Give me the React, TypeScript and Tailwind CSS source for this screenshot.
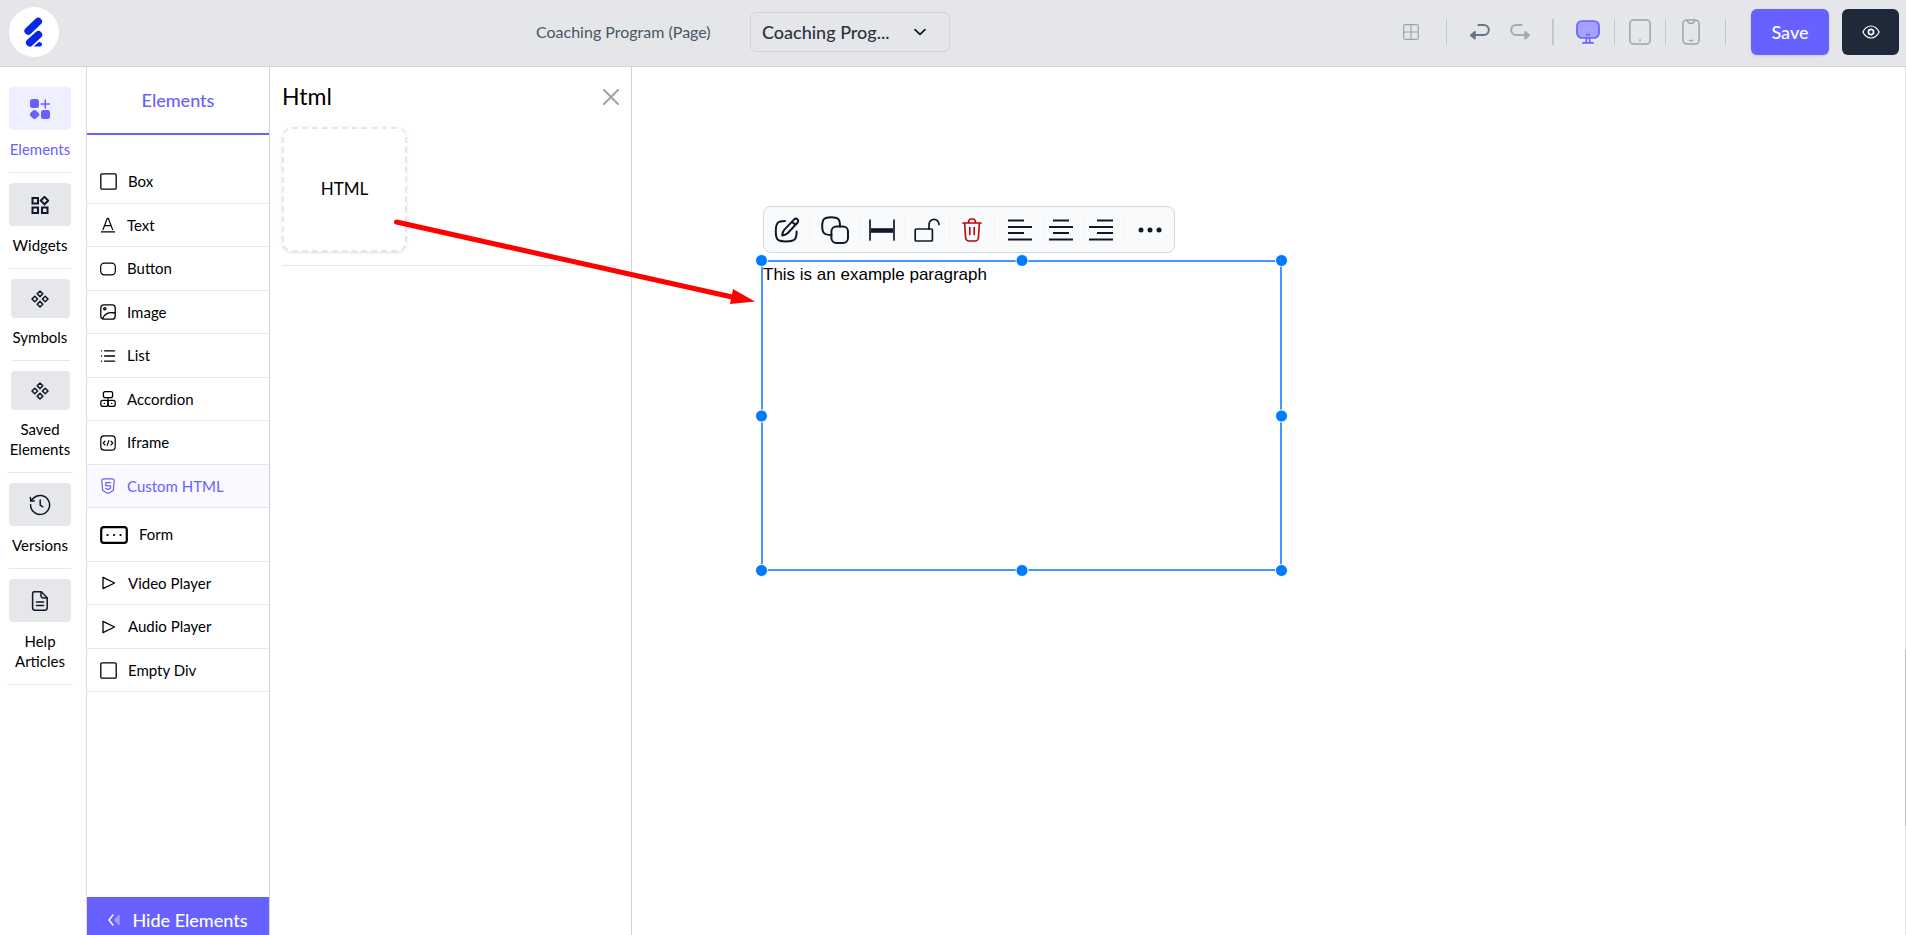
import type { ReactNode } from 'react';

type IconProps = { className?: string };

type SvgProps = IconProps & { box?: string; stroke?: number; children: ReactNode };

function Svg({ className = 'w-4 h-4', box = '0 0 24 24', stroke = 1.5, children }: SvgProps) {
  return (
    <svg
      className={`shrink-0 ${className}`}
      viewBox={box}
      fill="none"
      stroke="currentColor"
      strokeWidth={stroke}
      strokeLinecap="round"
      strokeLinejoin="round"
      aria-hidden="true"
    >
      {children}
    </svg>
  );
}

/* ---------- rail icons ---------- */

const ShapesIcon = () => (
  <Svg className="w-5 h-5" box="0 0 20 20" stroke={2}>
    <rect x="0" y="0" width="9" height="9" rx="2.5" fill="currentColor" stroke="none" />
    <rect x="11" y="11" width="9" height="9" rx="2.5" fill="currentColor" stroke="none" />
    <path d="M3.4 11.3a2 2 0 0 1 2.2 0l3 2.7a2 2 0 0 1 0 3l-3 2.7a2 2 0 0 1-2.2 0l-3-2.7a2 2 0 0 1 0-3z" fill="currentColor" stroke="none" />
    <path d="M15.3 1v8M11.2 5h8.2" stroke="currentColor" strokeWidth="1.5" />
  </Svg>
);

const WidgetsIcon = () => (
  <Svg className="w-[18px] h-[18px]" box="0 0 18 18" stroke={2}>
    <g strokeLinejoin="miter">
      <path d="M1.5 2h5.5v5.5H1.5zM1.5 11.5h5.5V17H1.5zM11 11.5h5.5V17H11z" />
      <path d="M13.5.9l3.7 3.7-3.7 3.7-3.7-3.7z" />
    </g>
  </Svg>
);

const ComponentIcon = () => (
  <Svg className="w-[18px] h-[18px]" box="0 0 18 18">
    <path d="M9 1l2.8 2.8L9 6.6 6.2 3.8zM9 11.4l2.8 2.8L9 17l-2.8-2.8zM3.8 6.2L6.6 9l-2.8 2.8L1 9zM14.2 6.2L17 9l-2.8 2.8L11.4 9z" />
  </Svg>
);

const HistoryIcon = () => (
  <Svg className="w-[22px] h-[22px]" box="0 0 22 22">
    <path d="M1.6 10.8a9.5 9.5 0 1 0 2.6-6.4L2 6.6" />
    <path d="M1.4 3.6l.4 3.5 3.5-.2M11.2 6v5.2l2.6 1.6" />
  </Svg>
);

const DocIcon = () => (
  <Svg className="w-5 h-5" box="0 0 20 20">
    <path d="M3.5.8h7.8l5.9 5.9v10.1a2.4 2.4 0 0 1-2.4 2.4H5a2.4 2.4 0 0 1-2.4-2.4V3A2.2 2.2 0 0 1 4.8.8z" />
    <path d="M11 1v3.6a2.4 2.4 0 0 0 2.4 2.4H17M6.4 11h7.2M6.4 14.6h7.2" />
  </Svg>
);

/* ---------- element list icons ---------- */

const BoxIcon = () => (
  <Svg className="w-[17px] h-[17px]" box="0 0 17 17" stroke={1.3}>
    <rect x=".8" y=".8" width="15.4" height="15.4" rx="1.2" />
  </Svg>
);

const TextIcon = () => (
  <Svg box="0 0 16 16" stroke={1.2}>
    <path d="M3 12.6L7.3 1.3h1L12.6 12.6M4.6 8.6h6.4M1.4 14.9h13.2" />
  </Svg>
);

const ButtonIcon = () => (
  <Svg box="0 0 16 16" stroke={1.2}>
    <rect x=".7" y="2.2" width="14.6" height="11.6" rx="3.6" />
  </Svg>
);

const ImageIcon = () => (
  <Svg box="0 0 16 16" stroke={1.3}>
    <rect x=".8" y=".8" width="14.4" height="14.4" rx="3" />
    <circle cx="4.8" cy="4.8" r="1.1" />
    <path d="M2.4 14.8C4 10.6 8.4 7.3 15 9" />
  </Svg>
);

const ListIcon = () => (
  <Svg box="0 0 16 16" stroke={1.3}>
    <path d="M4.6 2.8h10M4.6 8h10M4.6 13.2h10M1.4 2.8h.2M1.4 8h.2M1.4 13.2h.2" />
  </Svg>
);

const AccordionIcon = () => (
  <Svg box="0 0 16 16" stroke={1.3}>
    <rect x="3.4" y=".7" width="9.2" height="6" rx="1.6" />
    <rect x=".8" y="9.4" width="7.2" height="6" rx="1.8" />
    <rect x="8" y="9.4" width="7.2" height="6" rx="1.8" />
    <path d="M8 6.8v2.6M4.4 12.4h.1M11.6 12.4h.1" />
  </Svg>
);

const IframeIcon = () => (
  <Svg box="0 0 16 16" stroke={1.2}>
    <rect x=".8" y=".8" width="14.4" height="14.4" rx="3.4" />
    <path d="M5 6.2L3.3 8 5 9.8M11 6.2L12.7 8 11 9.8M8.8 5.6l-1.6 4.8" />
  </Svg>
);

const Html5Icon = () => (
  <Svg box="0 0 16 16" stroke={1.2}>
    <path d="M1.8 3a2 2 0 0 1 2-2.2h8.4a2 2 0 0 1 2 2.2l-.8 8.6a2 2 0 0 1-1 1.5L9 15a2 2 0 0 1-2 0l-3.4-1.9a2 2 0 0 1-1-1.5z" />
    <path d="M10.6 4.6H5.8v3h3.6a1.2 1.2 0 0 1 1.2 1.3l-.2 1.6L8 11.4l-2.4-.9" />
  </Svg>
);

const FormIcon = () => (
  <Svg className="w-7 h-[18px]" box="0 0 28 18" stroke={2.2}>
    <rect x="1.2" y="1.2" width="25.6" height="15.6" rx="2.6" />
    <path d="M7.5 9h.1M14 9h.1M20.5 9h.1" />
  </Svg>
);

const PlayIcon = () => (
  <Svg className="w-[17px] h-4" box="0 0 17 16" stroke={1.3}>
    <path d="M3 2.4v11.2L14.6 8z" />
  </Svg>
);

/* ---------- header icons ---------- */

const TableIcon = () => (
  <Svg box="0 0 16 16" stroke={1.2}>
    <rect x=".7" y=".7" width="14.6" height="14.6" rx="1.5" />
    <path d="M8 .8v14.4M.8 8h14.4" />
  </Svg>
);

const UndoIcon = ({ className }: IconProps) => (
  <Svg className={`w-5 h-[18px] ${className}`} box="0 0 20 18" stroke={2}>
    <path d="M8.4 2h5.4a5 5 0 0 1 0 10H3" />
    <path d="M4.8 9v6.4L1 12.2z" fill="currentColor" />
  </Svg>
);

const DesktopIcon = () => (
  <Svg className="w-6 h-6" stroke={1.7}>
    <rect x="1" y="1" width="22" height="17" rx="5" fill="#a5a2ff" />
    <path d="M11 14.6h2.4M10.6 18.2l-.6 4.6M13.4 18.2l.6 4.6M7 22.9h10" />
  </Svg>
);

const TabletIcon = () => (
  <Svg className="w-[22px] h-[26px]" box="0 0 22 26">
    <rect x=".9" y=".9" width="20.2" height="24.2" rx="3.5" />
    <path d="M11 21.2h.1" strokeWidth="2" />
  </Svg>
);

const PhoneIcon = () => (
  <Svg className="w-[18px] h-[26px]" box="0 0 18 26">
    <rect x=".9" y=".9" width="16.2" height="24.2" rx="4" />
    <path d="M5.4 1.2l.5 1.7a1.800 1.800 0 0 0 1.700 1.300h2.800a1.800 1.800 0 0 0 1.700-1.300l.5-1.700M7.400 21.400h3.200" />
  </Svg>
);

const EyeIcon = () => (
  <Svg className="w-[18px] h-[18px]" box="0 0 18 18" stroke={1.2}>
    <path d="M.8 9C2.8 5.2 5.7 3 9 3s6.2 2.2 8.2 6c-2 3.800-4.900 6-8.200 6S2.800 12.800.8 9z" />
    <circle cx="9" cy="9" r="2.6" strokeWidth="1.6" />
  </Svg>
);

/* ---------- toolbar icons ---------- */

const EditIcon = () => (
  <Svg className="w-[26px] h-[26px]" box="0 0 26 26" stroke={2}>
    <path d="M11 4C4 4 1.8 5.4 1.8 14.4S4 24.4 12 24.4s10.600-1 10.600-10" />
    <path d="M20.2 2.4a2.300 2.300 0 0 1 3.300 3.300L13.600 16.200c-1.400 1.400-3.400 1.900-5.400 2.200.2-2 .8-4.400 2.200-5.800zM18 4.600l3.400 3.400" />
  </Svg>
);

const CopyIcon = () => (
  <Svg className="w-7 h-7" box="0 0 28 28" stroke={2}>
    <rect x="10.4" y="10.4" width="16.6" height="16.6" rx="5" />
    <path d="M10.4 19C3.200 19 1.200 17 1.200 10.200S3 1.200 10.200 1.200 19 3.200 19 10.400" />
  </Svg>
);

const WidthIcon = () => (
  <Svg className="w-[26px] h-[22px]" box="0 0 26 22" stroke={1.7}>
    <path d="M1 1v20M25 1v20" />
    <path d="M2 11.500h22" strokeWidth="4.600" strokeLinecap="butt" />
  </Svg>
);

const UnlockIcon = () => (
  <Svg className="w-[26px] h-6" box="0 0 26 24" stroke={1.7}>
    <rect x="1.2" y="11" width="17.2" height="12" rx="1" />
    <path d="M15 11V6.400a5 5 0 0 1 10 0" />
  </Svg>
);

const TrashIcon = () => (
  <Svg className="w-5 h-6" box="0 0 20 24" stroke={1.6}>
    <path d="M.9 5h18.200M2.600 5l1 14.600A3.400 3.400 0 0 0 7 23h6a3.400 3.400 0 0 0 3.400-3.400l1-14.600M6.200 5l.8-2.600A2 2 0 0 1 8.800 1h2.400A2 2 0 0 1 13 2.400l.8 2.600M7.800 9.600v7M12.200 9.600v7" />
  </Svg>
);

function AlignIcon({ d }: { d: string }) {
  return (
    <Svg className="w-6 h-[22px]" box="0 0 24 22" stroke={2}>
      <path d={d} strokeLinecap="butt" />
    </Svg>
  );
}

/* ---------- data ---------- */

const RAIL = [
  { label: 'Elements', icon: <ShapesIcon />, tile: 'w-[62px] h-[43px]', line: 'w-[62px]', active: true },
  { label: 'Widgets', icon: <WidgetsIcon />, tile: 'w-[62px] h-[43px]', line: 'w-[62px]' },
  { label: 'Symbols', icon: <ComponentIcon />, tile: 'w-[59px] h-[39px]', line: 'w-[59px]' },
  { label: 'Saved Elements', icon: <ComponentIcon />, tile: 'w-[59px] h-[39px]', line: 'w-[66px]' },
  { label: 'Versions', icon: <HistoryIcon />, tile: 'w-[62px] h-[43px]', line: 'w-[62px]' },
  { label: 'Help Articles', icon: <DocIcon />, tile: 'w-[62px] h-[43px]', line: 'w-[66px]' },
];

const ELEMENTS = [
  { label: 'Box', icon: <BoxIcon /> },
  { label: 'Text', icon: <TextIcon /> },
  { label: 'Button', icon: <ButtonIcon /> },
  { label: 'Image', icon: <ImageIcon /> },
  { label: 'List', icon: <ListIcon /> },
  { label: 'Accordion', icon: <AccordionIcon /> },
  { label: 'Iframe', icon: <IframeIcon /> },
  { label: 'Custom HTML', icon: <Html5Icon />, active: true },
  { label: 'Form', icon: <FormIcon />, tall: true },
  { label: 'Video Player', icon: <PlayIcon /> },
  { label: 'Audio Player', icon: <PlayIcon /> },
  { label: 'Empty Div', icon: <BoxIcon /> },
];

const TOOLS = [
  { label: 'Edit', icon: <EditIcon />, width: 'w-[46px]' },
  { label: 'Duplicate', icon: <CopyIcon />, width: 'w-[50px]' },
  { label: 'Full width', icon: <WidthIcon />, width: 'w-[45px]' },
  { label: 'Unlock', icon: <UnlockIcon />, width: 'w-[45px]' },
  { label: 'Delete', icon: <TrashIcon />, width: 'w-[45px] text-red-700' },
  { label: 'Align left', icon: <AlignIcon d="M0 1.5h16M0 8h24M0 14h16M0 20.5h24" />, width: 'w-[50px]' },
  { label: 'Align center', icon: <AlignIcon d="M4 1.5h16M0 8h24M4 14h16M0 20.5h24" />, width: 'w-10 pr-2' },
  { label: 'Align right', icon: <AlignIcon d="M8 1.5h16M0 8h24M8 14h16M0 20.5h24" />, width: 'w-10 pr-2' },
];

const HANDLES = [
  '-left-2 -top-2',
  'left-1/2 -top-2 -translate-x-1/2',
  '-right-2 -top-2',
  '-left-2 top-1/2 -translate-y-1/2',
  '-right-2 top-1/2 -translate-y-1/2',
  '-left-2 -bottom-2',
  'left-1/2 -bottom-2 -translate-x-1/2',
  '-right-2 -bottom-2',
];

/* ---------- sections ---------- */

function Divider() {
  return <span className="w-px h-[26px] bg-[#c3c7cf]" />;
}

function Header() {
  return (
    <header className="h-[67px] shrink-0 flex items-center justify-between pl-[9px] pr-[7px] pb-[3px] bg-[#e5e6ea] border-b border-[#d3d3df]">
      <a href="#" aria-label="Home" className="w-[50px] h-[50px] rounded-full bg-white">
        <svg className="w-[50px] h-[50px]" viewBox="0 0 50 50" aria-hidden="true">
          <path d="M19.2 24L29.2 14.6M20.8 35.6l8.6-7.8" stroke="#0b27e3" strokeWidth="7.6" strokeLinecap="round" />
          <path d="M24.6 39.600l4.800-4.200c1.600-1 3.600.2 3.600 2.200 0 1.200-.9 2-2 2z" fill="#0b27e3" />
        </svg>
      </a>

      <div className="flex items-center ml-6">
        <span className="w-[214px] text-base text-[#4b5563]">Coaching Program (Page)</span>
        <div className="relative w-[200px]">
          <select
            aria-label="Page"
            className="w-full h-10 pl-[11px] pr-12 appearance-none rounded-md border border-[#d1d3d9] bg-transparent text-lg font-medium text-[#2b3340]"
          >
            <option>Coaching Prog...</option>
          </select>
          <Svg className="absolute right-[22px] top-3 w-4 h-4 pointer-events-none text-gray-900" box="0 0 16 16" stroke={1.8}>
            <path d="M3 5.6l5 4.8 5-4.8" />
          </Svg>
        </div>
      </div>

      <div className="flex items-center text-[#9ca3af]">
        <button aria-label="Grid"><TableIcon /></button>
        <span className="flex ml-[27px] mr-[23px]"><Divider /></span>
        <button aria-label="Undo"><UndoIcon className="text-[#64748b]" /></button>
        <button aria-label="Redo" className="ml-5"><UndoIcon className="-scale-x-100 text-[#a1aab8]" /></button>
        <span className="w-0.5 h-[26px] mx-[22px] bg-[#c3c7cf]" />
        <div className="flex items-center gap-[14px]">
          <button aria-label="Desktop" className="text-[#6661ff]"><DesktopIcon /></button>
          <Divider />
          <button aria-label="Tablet"><TabletIcon /></button>
          <Divider />
          <button aria-label="Phone" className="ml-0.5"><PhoneIcon /></button>
        </div>
        <span className="flex mx-[25px]"><Divider /></span>
        <button className="w-[78px] h-[46px] rounded-md bg-[#6661ff] text-white text-lg font-medium shadow">Save</button>
        <button aria-label="Preview" className="w-[57px] h-[46px] ml-[13px] rounded-md bg-gray-800 text-white flex items-center justify-center">
          <EyeIcon />
        </button>
      </div>
    </header>
  );
}

function Rail() {
  return (
    <nav className="w-[87px] shrink-0 pl-[7px] pt-5 border-r border-[#d9dae2]">
      {RAIL.map((item) => (
        <button key={item.label} className="w-[66px] mb-2.5 flex flex-col items-center text-[15px] leading-5">
          <span
            className={`flex items-center justify-center rounded-sm ${item.tile} ${
              item.active ? 'bg-[#f0efff] text-[#6661ff]' : 'bg-[#e5e7eb]'
            }`}
          >
            {item.icon}
          </span>
          <span className={`pt-[9px] pb-[13px] border-b border-gray-200 ${item.line} ${item.active ? 'text-[#6661ff]' : 'text-black'}`}>
            {item.label}
          </span>
        </button>
      ))}
    </nav>
  );
}

function ElementList() {
  return (
    <aside className="w-[183px] shrink-0 flex flex-col border-r border-[#d1d3d9]">
      <h2 className="h-[68px] shrink-0 flex items-center justify-center border-b-2 border-[#6661ff] text-lg font-medium text-[#6661ff]">
        Elements
      </h2>
      <ul className="mt-[25px] flex-1 text-[15px] text-black">
        {ELEMENTS.map((item) => (
          <li key={item.label} className={`border-b border-gray-200 ${item.tall ? 'h-[54px]' : 'odd:h-11 even:h-[43px]'}`}>
            <button
              className={`w-full h-full pl-[13px] flex items-center gap-[11px] ${item.active ? 'bg-[#f9f9ff] text-[#6661ff]' : ''}`}
            >
              {item.icon}
              {item.label}
            </button>
          </li>
        ))}
      </ul>
      <button className="h-[38px] pt-2 shrink-0 flex items-center justify-center gap-3 bg-[#6661ff] text-white text-lg font-medium">
        <Svg className="w-3 h-3" box="0 0 12 12" stroke={1.4}>
          <path d="M5 1L1 6l4 5" />
          <path d="M11 1L6.6 6 11 11z" fill="#a5a2ff" stroke="#a5a2ff" strokeWidth=".8" />
        </Svg>
        Hide Elements
      </button>
    </aside>
  );
}

function HtmlPanel() {
  return (
    <section className="w-[362px] shrink-0 px-3 border-r border-[#d1d3d9]">
      <div className="h-[60px] flex items-center justify-between">
        <h3 className="pb-0.5 text-[23px] text-black">Html</h3>
        <button aria-label="Close" className="text-[#9ca3af]">
          <Svg box="0 0 16 16" stroke={2}>
            <path d="M1 1l14 14M15 1L1 15" />
          </Svg>
        </button>
      </div>
      <div className="pb-[13px] border-b border-gray-200">
        <button className="w-[125px] h-[125px] pb-0.5 rounded-[10px] border-2 border-dashed border-gray-200 shadow-sm text-[17px] text-black">
          HTML
        </button>
      </div>
    </section>
  );
}

function Canvas() {
  return (
    <main className="flex-1 min-w-0 pl-[129px] pt-[139px] border-r border-[#e4e4e8] relative">
      <div className="ml-0.5 w-[412px] h-[47px] flex items-center rounded-lg border border-gray-300 bg-[#f9fafb] text-gray-900">
        {TOOLS.map((tool) => (
          <button
            key={tool.label}
            aria-label={tool.label}
            className={`h-[30px] shrink-0 flex items-center justify-center border-r border-gray-100 ${tool.width}`}
          >
            {tool.icon}
          </button>
        ))}
        <button aria-label="More" className="flex-1 h-[30px] flex items-center justify-center">
          <Svg className="w-6 h-6">
            <g fill="currentColor" stroke="none">
              <circle cx="3" cy="12" r="2.5" />
              <circle cx="12" cy="12" r="2.5" />
              <circle cx="21" cy="12" r="2.5" />
            </g>
          </Svg>
        </button>
      </div>

      <div className="relative mt-[7px] w-[521px] h-[311px] border-2 border-[#4595ff]">
        <p className="font-['Liberation_Sans',sans-serif] text-[17px] leading-[26px] text-black">This is an example paragraph</p>
        {HANDLES.map((pos) => (
          <span key={pos} className={`absolute w-[13px] h-[13px] rounded-full bg-[#007bff] border border-white ${pos}`} />
        ))}
      </div>

      {/* arrow from the HTML tile to the dropped block */}
      <svg className="absolute -left-[242px] top-[147px] w-[368px] h-[96px] pointer-events-none" viewBox="0 0 368 96" aria-hidden="true">
        <path d="M6.5 8L342 83" stroke="#ff0000" strokeWidth="5" strokeLinecap="round" />
        <path d="M343 75L365 87.500 340 90z" fill="#ff0000" />
      </svg>

      {/* scroll thumb */}
      <span className="absolute -right-px top-[583px] w-px h-[176px] bg-[#bdbdcb]" />
    </main>
  );
}

export default function App() {
  return (
    <div className="h-screen flex flex-col overflow-hidden bg-white font-[Lato,sans-serif] text-gray-900">
      <Header />
      <div className="flex-1 min-h-0 flex">
        <Rail />
        <ElementList />
        <HtmlPanel />
        <Canvas />
      </div>
    </div>
  );
}
